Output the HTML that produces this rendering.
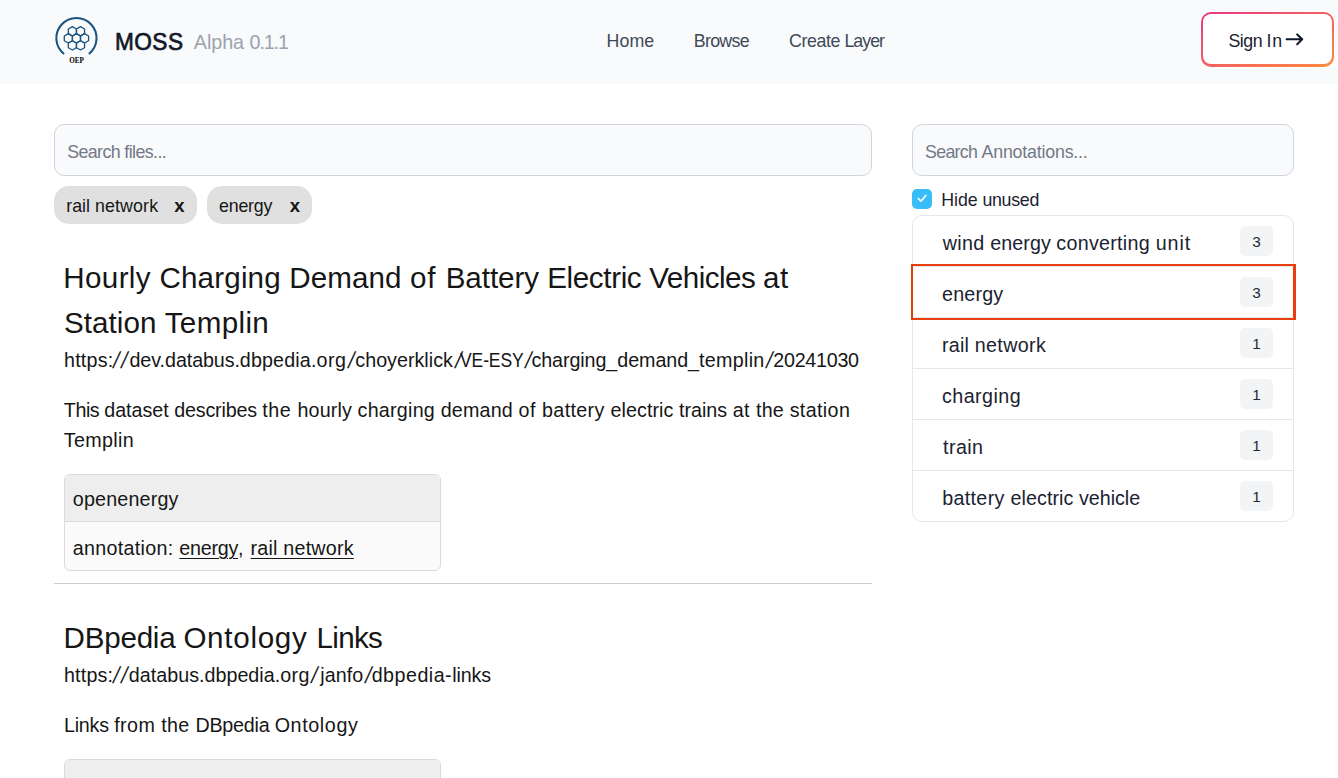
<!DOCTYPE html>
<html lang="en">
<head>
<meta charset="utf-8">
<title>MOSS</title>
<style>
*{box-sizing:border-box}
html,body{margin:0;padding:0}
body{width:1338px;height:778px;overflow:hidden;background:#fff;position:relative;
  font-family:"Liberation Sans",sans-serif;color:#161616;line-height:30px}
.abs{position:absolute;white-space:pre;margin:0}
.w{position:absolute;top:0;white-space:pre}
ul,li{list-style:none;margin:0;padding:0}
header{position:absolute;left:0;top:0;width:1338px;height:84px;background:#f9fafb}
.brand{font-weight:400;color:#111827;-webkit-text-stroke:0.7px #111827}
.ver{color:#9ca3af}
.nav{color:#3f4958;text-decoration:none}
.signin{left:1201px;top:12px;width:133px;height:55px;border-radius:10px;
  background:linear-gradient(to bottom right,#e83785,#fd8a3e);box-shadow:0 0 0 1px rgba(255,255,255,.7)}
.signin i{position:absolute;left:2px;top:2px;right:2px;bottom:2.7px;background:#fff;border-radius:8px}
.sitx{color:#1b2231}
.search{height:52px;border:1px solid #d1d5db;border-radius:10px;background:#f9fafb;top:124px}
.ph{color:#727987}
.chip{top:186px;height:38px;border-radius:15px;background:#e0e0e0}
.cx{font-weight:700}
h2{font-weight:400;line-height:45px}
.card{left:64px;width:377px;height:97px;border:1px solid #dadada;border-radius:6px;background:#fafafa}
.card .hd{position:absolute;left:0;top:0;width:100%;height:47px;background:#eee;border-bottom:1px solid #dadada}
u{text-decoration-thickness:1px;text-underline-offset:2.5px}
.list{left:912px;top:215px;width:382px;height:307px;border:1px solid #e5e7eb;border-radius:10px;background:#fff}
.dv{left:913px;width:380px;height:1px;background:#e5e7eb}
.rt{color:#1b2231}
.badge{left:1240px;width:33px;height:30px;border-radius:5px;background:#f3f4f6;
  font-size:15.3px;line-height:31px;text-align:center;color:#1f2937}
.sel{left:911px;top:264px;width:385px;height:56px;border:2px solid #e93e0f;border-right-width:3px}
.hide{color:#1b2231}
</style>
</head>
<body>
<header>
  <svg class="abs" style="left:50px;top:10px" width="54" height="60" viewBox="0 0 54 60">
    <g fill="none" stroke="#1a5480">
      <path stroke-width="2.1" d="M14.08 43.99 A20.1 20.1 0 1 1 38.82 43.99"/>
      <g stroke-width="1.3" stroke-linejoin="round">
        <path d="M26.45 23.67 L30.50 26.01 L30.50 30.69 L26.45 33.03 L22.40 30.69 L22.40 26.01 Z"/>
        <path d="M18.34 23.67 L22.40 26.01 L22.40 30.69 L18.34 33.03 L14.29 30.69 L14.29 26.01 Z"/>
        <path d="M34.56 23.67 L38.61 26.01 L38.61 30.69 L34.56 33.03 L30.50 30.69 L30.50 26.01 Z"/>
        <path d="M22.40 16.65 L26.45 18.99 L26.45 23.67 L22.40 26.01 L18.34 23.67 L18.34 18.99 Z"/>
        <path d="M30.50 16.65 L34.56 18.99 L34.56 23.67 L30.50 26.01 L26.45 23.67 L26.45 18.99 Z"/>
        <path d="M22.40 30.69 L26.45 33.03 L26.45 37.71 L22.40 40.05 L18.34 37.71 L18.34 33.03 Z"/>
        <path d="M30.50 30.69 L34.56 33.03 L34.56 37.71 L30.50 40.05 L26.45 37.71 L26.45 33.03 Z"/>
      </g>
    </g>
    <text transform="translate(26.6 52.6) scale(0.9 1)" text-anchor="middle" font-family="Liberation Serif,serif" font-weight="700" font-size="7.9" fill="#000">OEP</text>
  </svg>
  <span class="abs brand" id="brand" style="left:115.04px;top:26.50px;font-size:24.6px;letter-spacing:0.490px;transform:scaleX(0.92);transform-origin:0 0">MOSS</span>
  <span class="abs ver" id="ver" style="left:193.76px;top:27.00px;font-size:19.8px"><span class="w" style="left:0.00px;letter-spacing:-0.055px">Alpha </span><span class="w" style="left:55.77px;letter-spacing:-1.140px">0.1.1</span></span>
  <nav>
    <a class="abs nav" id="home" style="left:606.54px;top:26.00px;font-size:17.8px;letter-spacing:0.071px">Home</a>
    <a class="abs nav" id="browse" style="left:693.84px;top:26.00px;font-size:17.8px;letter-spacing:-0.709px">Browse</a>
    <a class="abs nav" id="create" style="left:789.10px;top:26.00px;font-size:17.8px"><span class="w" style="left:0.00px;letter-spacing:-0.424px">Create </span><span class="w" style="left:55.34px;letter-spacing:-0.982px">Layer</span></a>
  </nav>
  <div class="abs signin"><i></i></div>
  <span class="abs sitx" id="signin" style="left:1228.39px;top:26.00px;font-size:17.8px"><span class="w" style="left:0.00px;letter-spacing:-0.473px">Sign </span><span class="w" style="left:38.17px;letter-spacing:0.755px">In</span></span>
  <svg class="abs" style="left:1284px;top:32.4px" width="22" height="15" viewBox="0 0 22 15"><path d="M2.6 7.3 H18 M13.2 2.4 L18.2 7.3 L13.2 12.2" fill="none" stroke="#111827" stroke-width="2.05" stroke-linecap="round" stroke-linejoin="round"/></svg>
</header>

<main>
<div class="abs search" style="left:54px;width:818px"></div>
<span class="abs ph" id="sfiles" style="left:67.19px;top:137.00px;font-size:17.8px"><span class="w" style="left:0.00px;letter-spacing:-0.589px">Search </span><span class="w" style="left:57.16px;letter-spacing:-0.582px">files...</span></span>
<div class="abs chip" style="left:54px;width:143px"></div>
<span class="abs" id="chip1" style="left:66.22px;top:191.00px;font-size:17.8px"><span class="w" style="left:0.00px;letter-spacing:0.009px">rail </span><span class="w" style="left:28.70px;letter-spacing:0.148px">network</span></span><span class="abs cx" id="chip1x" style="left:174.37px;top:190.50px;font-size:18.6px;letter-spacing:0.000px">x</span>
<div class="abs chip" style="left:207px;width:105px"></div>
<span class="abs" id="chip2" style="left:219.04px;top:191.00px;font-size:17.8px;letter-spacing:-0.217px">energy</span><span class="abs cx" id="chip2x" style="left:289.67px;top:190.50px;font-size:18.6px;letter-spacing:0.000px">x</span>

<article>
<h2 class="abs" id="t1a" style="left:63.37px;top:255.00px;font-size:29.6px"><span class="w" style="left:0.00px;letter-spacing:0.339px">Hourly </span><span class="w" style="left:96.12px;letter-spacing:0.161px">Charging </span><span class="w" style="left:225.90px;letter-spacing:0.084px">Demand </span><span class="w" style="left:346.59px;letter-spacing:0.936px">of </span><span class="w" style="left:382.30px;letter-spacing:-0.061px">Battery </span><span class="w" style="left:483.80px;letter-spacing:-0.361px">Electric </span><span class="w" style="left:585.80px;letter-spacing:-0.509px">Vehicles </span><span class="w" style="left:699.67px;letter-spacing:0.487px">at</span></h2>
<h2 class="abs" id="t1b" style="left:63.96px;top:300.00px;font-size:29.6px"><span class="w" style="left:0.00px;letter-spacing:0.052px">Station </span><span class="w" style="left:100.78px;letter-spacing:0.350px">Templin</span></h2>
<div class="abs" id="u1" style="left:64.03px;top:345.00px;font-size:19.7px"><span class="w" style="left:0.00px;letter-spacing:0.202px">https:</span><span class="w" style="left:48.97px;letter-spacing:0.000px;transform:skewX(-13deg) scaleY(1.18);transform-origin:50% 60%">/</span><span class="w" style="left:57.37px;letter-spacing:0.000px;transform:skewX(-13deg) scaleY(1.18);transform-origin:50% 60%">/</span><span class="w" style="left:65.44px;letter-spacing:-0.038px">dev.</span><span class="w" style="left:101.04px;letter-spacing:-0.091px">databus.</span><span class="w" style="left:175.84px;letter-spacing:0.144px">dbpedia.</span><span class="w" style="left:252.54px;letter-spacing:0.414px">org</span><span class="w" style="left:283.97px;letter-spacing:0.000px;transform:skewX(-13deg) scaleY(1.18);transform-origin:50% 60%">/</span><span class="w" style="left:291.33px;letter-spacing:0.013px">choyerklick</span><span class="w" style="left:390.67px;letter-spacing:0.000px;transform:skewX(-13deg) scaleY(1.18);transform-origin:50% 60%">/</span><span class="w" style="left:396.39px;letter-spacing:-0.138px;transform:scaleX(0.89);transform-origin:0 0">VE-ESY</span><span class="w" style="left:460.57px;letter-spacing:0.000px;transform:skewX(-13deg) scaleY(1.18);transform-origin:50% 60%">/</span><span class="w" style="left:467.43px;letter-spacing:-0.075px">charging_</span><span class="w" style="left:553.24px;letter-spacing:-0.054px">demand_</span><span class="w" style="left:634.97px;letter-spacing:0.301px">templin</span><span class="w" style="left:702.27px;letter-spacing:0.000px;transform:skewX(-13deg) scaleY(1.18);transform-origin:50% 60%">/</span><span class="w" style="left:709.28px;letter-spacing:-0.264px">20241030</span></div>
<p class="abs" id="d1a" style="left:63.86px;top:395.00px;font-size:19.7px"><span class="w" style="left:0.00px;letter-spacing:-0.451px">This </span><span class="w" style="left:40.42px;letter-spacing:-0.020px">dataset </span><span class="w" style="left:110.32px;letter-spacing:-0.171px">describes </span><span class="w" style="left:198.34px;letter-spacing:0.597px">the </span><span class="w" style="left:233.58px;letter-spacing:0.148px">hourly </span><span class="w" style="left:293.71px;letter-spacing:0.246px">charging </span><span class="w" style="left:376.92px;letter-spacing:0.154px">demand </span><span class="w" style="left:454.62px;letter-spacing:0.556px">of </span><span class="w" style="left:478.17px;letter-spacing:0.358px">battery </span><span class="w" style="left:546.71px;letter-spacing:0.055px">electric </span><span class="w" style="left:615.04px;letter-spacing:0.019px">trains </span><span class="w" style="left:668.81px;letter-spacing:0.516px">at </span><span class="w" style="left:692.24px;letter-spacing:0.177px">the </span><span class="w" style="left:725.79px;letter-spacing:0.369px">station</span></p>
<p class="abs" id="d1b" style="left:63.86px;top:425.00px;font-size:19.7px;letter-spacing:0.313px">Templin</p>
<div class="abs card" style="top:474px"><div class="hd"></div></div>
<div class="abs" id="c1h" style="left:72.77px;top:484.00px;font-size:19.7px;letter-spacing:0.185px">openenergy</div>
<div class="abs" id="c1b" style="left:72.76px;top:533.00px;font-size:19.7px"><span class="w" style="left:0.00px;letter-spacing:0.308px">annotation: </span><span class="w" style="left:106.60px;letter-spacing:-0.239px"><u>energy</u></span><span class="w" style="left:165.37px;letter-spacing:0.754px">, </span><span class="w" style="left:177.83px;letter-spacing:0.210px"><u>rail network</u></span></div>
</article>
<div class="abs" style="left:54px;top:583px;width:818px;height:1px;background:#ccc"></div>

<article>
<h2 class="abs" id="t2" style="left:63.57px;top:615.00px;font-size:29.6px"><span class="w" style="left:0.00px;letter-spacing:-0.240px">DBpedia </span><span class="w" style="left:119.83px;letter-spacing:0.711px">Ontology </span><span class="w" style="left:252.90px;letter-spacing:-0.674px">Links</span></h2>
<div class="abs" id="u2" style="left:63.93px;top:660.00px;font-size:19.7px"><span class="w" style="left:0.00px;letter-spacing:0.202px">https:</span><span class="w" style="left:48.97px;letter-spacing:0.000px;transform:skewX(-13deg) scaleY(1.18);transform-origin:50% 60%">/</span><span class="w" style="left:57.37px;letter-spacing:0.000px;transform:skewX(-13deg) scaleY(1.18);transform-origin:50% 60%">/</span><span class="w" style="left:64.74px;letter-spacing:0.046px">databus.</span><span class="w" style="left:140.64px;letter-spacing:0.007px">dbpedia.</span><span class="w" style="left:216.24px;letter-spacing:0.464px">org</span><span class="w" style="left:247.47px;letter-spacing:0.000px;transform:skewX(-13deg) scaleY(1.18);transform-origin:50% 60%">/</span><span class="w" style="left:256.35px;letter-spacing:0.061px">janfo</span><span class="w" style="left:300.87px;letter-spacing:0.000px;transform:skewX(-13deg) scaleY(1.18);transform-origin:50% 60%">/</span><span class="w" style="left:307.74px;letter-spacing:0.482px">dbpedia-</span><span class="w" style="left:388.24px;letter-spacing:-0.138px">links</span></div>
<p class="abs" id="d2" style="left:63.88px;top:710.00px;font-size:19.7px"><span class="w" style="left:0.00px;letter-spacing:-0.183px">Links </span><span class="w" style="left:50.34px;letter-spacing:0.444px">from </span><span class="w" style="left:97.42px;letter-spacing:0.335px">the </span><span class="w" style="left:131.60px;letter-spacing:-0.227px">DBpedia </span><span class="w" style="left:210.78px;letter-spacing:0.623px">Ontology</span></p>
<div class="abs card" style="top:759px"><div class="hd"></div></div>
</article>
</main>

<aside>
<div class="abs search" style="left:912px;width:382px"></div>
<span class="abs ph" id="sann" style="left:924.99px;top:137.00px;font-size:17.8px"><span class="w" style="left:0.00px;letter-spacing:-0.673px">Search </span><span class="w" style="left:56.57px;letter-spacing:-0.192px">Annotations...</span></span>
<div class="abs" style="left:912px;top:189px;width:20px;height:20px;border-radius:5px;background:#38bdf8"><svg width="20" height="20" viewBox="0 0 20 20" style="display:block"><path d="M6.3 9.5 L8.9 12.2 L13.8 6.5" fill="none" stroke="#fff" stroke-width="1.7" stroke-linecap="round" stroke-linejoin="round"/></svg></div>
<span class="abs hide" id="hide" style="left:941.34px;top:185.00px;font-size:17.8px"><span class="w" style="left:0.00px;letter-spacing:-0.082px">Hide </span><span class="w" style="left:41.10px;letter-spacing:-0.288px">unused</span></span>
<div class="abs list"></div>
<div class="abs dv" style="top:266px"></div><div class="abs dv" style="top:317px"></div><div class="abs dv" style="top:368px"></div><div class="abs dv" style="top:419px"></div><div class="abs dv" style="top:470px"></div>
<ul>
  <li><span class="abs rt" id="r1" style="left:942.83px;top:228.00px;font-size:19.7px"><span class="w" style="left:0.00px;letter-spacing:0.313px">wind </span><span class="w" style="left:47.53px;letter-spacing:0.047px">energy </span><span class="w" style="left:113.53px;letter-spacing:0.277px">converting </span><span class="w" style="left:212.89px;letter-spacing:0.925px">unit</span></span><span class="abs badge" style="top:226px">3</span></li>
  <li><span class="abs rt" id="r2" style="left:942.06px;top:279.00px;font-size:19.7px;letter-spacing:0.174px">energy</span><span class="abs badge" style="top:277px">3</span></li>
  <li><span class="abs rt" id="r3" style="left:941.99px;top:330.00px;font-size:19.7px"><span class="w" style="left:0.00px;letter-spacing:0.193px">rail </span><span class="w" style="left:32.70px;letter-spacing:0.374px">network</span></span><span class="abs badge" style="top:328px">1</span></li>
  <li><span class="abs rt" id="r4" style="left:942.06px;top:381.00px;font-size:19.7px;letter-spacing:0.439px">charging</span><span class="abs badge" style="top:379px">1</span></li>
  <li><span class="abs rt" id="r5" style="left:943.00px;top:432.00px;font-size:19.7px;letter-spacing:0.441px">train</span><span class="abs badge" style="top:430px">1</span></li>
  <li><span class="abs rt" id="r6" style="left:942.13px;top:483.00px;font-size:19.7px"><span class="w" style="left:0.00px;letter-spacing:0.345px">battery </span><span class="w" style="left:68.43px;letter-spacing:0.070px">electric </span><span class="w" style="left:136.90px;letter-spacing:-0.026px">vehicle</span></span><span class="abs badge" style="top:481px">1</span></li>
</ul>
<div class="abs sel"></div>
</aside>
</body>
</html>
